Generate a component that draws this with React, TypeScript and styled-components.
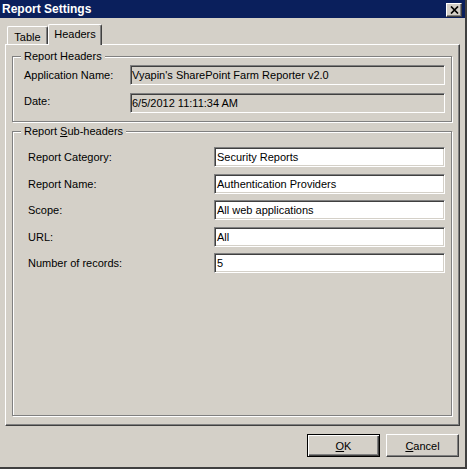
import { Fragment } from 'react';
import styled, { createGlobalStyle } from 'styled-components';

const GlobalStyle = createGlobalStyle`
  body {
    margin: 0;
    background: #d4d0c8;
    font-family: "Liberation Sans", Arial, sans-serif;
    font-size: 11px;
    color: #000;
  }
`;

const Window = styled.div`
  width: 467px;
  height: 469px;
  box-sizing: border-box;
  background: #d4d0c8;
  border-right: 2px solid #404040;
  border-bottom: 2px solid #404040;
  display: flex;
  flex-direction: column;
`;

const TitleBar = styled.div`
  height: 18px;
  flex-shrink: 0;
  background: #0a1f5c;
  display: flex;
  align-items: center;
  justify-content: space-between;
  padding: 0 3px 0 2px;
`;

const Title = styled.span`
  color: #fff;
  font-weight: bold;
  font-size: 12px;
  line-height: 1;
`;

const CloseButton = styled.div`
  width: 16px;
  height: 14px;
  box-sizing: border-box;
  margin-top: 2px;
  background: #d4d0c8;
  border: 1px solid;
  border-color: #fff #404040 #404040 #fff;
  box-shadow: inset -1px -1px 0 #808080;
  display: flex;
  align-items: center;
  justify-content: center;
`;

const Body = styled.div`
  padding: 6px 5px 0 5px;
  display: flex;
  flex-direction: column;
`;

const TabStrip = styled.div`
  height: 20px;
  display: flex;
  align-items: flex-end;
  padding-left: 2px;
`;

const Tab = styled.div<{ $active?: boolean }>`
  position: relative;
  box-sizing: border-box;
  width: ${(p) => (p.$active ? 54 : 41)}px;
  height: ${(p) => (p.$active ? 21 : 18)}px;
  margin-bottom: ${(p) => (p.$active ? -1 : 0)}px;
  z-index: ${(p) => (p.$active ? 1 : 0)};
  background: #d4d0c8;
  border-top: 1px solid #fff;
  border-left: 1px solid #fff;
  border-right: 1px solid #404040;
  border-radius: 2px 2px 0 0;
  box-shadow: inset -1px 0 0 #808080;
  display: flex;
  justify-content: center;
  padding-top: ${(p) => (p.$active ? 3 : 4)}px;
  line-height: 13px;
`;

const Panel = styled.div`
  height: 382px;
  box-sizing: border-box;
  border: 1px solid;
  border-color: #fff #404040 #404040 #fff;
  box-shadow: inset -1px -1px 0 #808080;
  padding: 11px 7px 0 6px;
  display: flex;
  flex-direction: column;
  gap: 9px;
`;

const Group = styled.div<{ $height: number }>`
  position: relative;
  box-sizing: border-box;
  height: ${(p) => p.$height}px;
  border: 1px solid #808080;
  box-shadow: inset 1px 1px 0 #fff, 1px 1px 0 #fff;
`;

const Legend = styled.span`
  position: absolute;
  top: -7px;
  left: 8px;
  padding: 0 3px;
  background: #d4d0c8;
  line-height: 13px;
`;

const Fields = styled.div<{ $label: number; $top: number; $left: number; $gap: number }>`
  display: grid;
  grid-template-columns: ${(p) => p.$label}px 1fr;
  grid-auto-rows: 20px;
  row-gap: ${(p) => p.$gap}px;
  padding: ${(p) => p.$top}px 6px 0 ${(p) => p.$left}px;
`;

const Label = styled.label<{ $shift?: number }>`
  align-self: center;
  position: relative;
  top: ${(p) => p.$shift ?? 0}px;
`;

const TextBox = styled.div<{ $readOnly?: boolean }>`
  box-sizing: border-box;
  height: 20px;
  border: 1px solid;
  border-color: #808080 #fff #fff #808080;
  box-shadow: inset 1px 1px 0 #404040, inset -1px -1px 0 #d4d0c8;
  background: ${(p) => (p.$readOnly ? '#d4d0c8' : '#fff')};
  padding: 0 0 0 ${(p) => (p.$readOnly ? 1 : 2)}px;
  display: flex;
  align-items: center;
  white-space: nowrap;
  overflow: hidden;
`;

const Footer = styled.div`
  display: flex;
  justify-content: flex-end;
  gap: 6px;
  padding: 8px 1px 0 0;
`;

const Button = styled.div<{ $default?: boolean }>`
  width: 73px;
  height: 23px;
  box-sizing: border-box;
  background: #d4d0c8;
  display: flex;
  align-items: center;
  justify-content: center;
  border: 1px solid;
  border-color: ${(p) => (p.$default ? '#000' : '#fff #404040 #404040 #fff')};
  box-shadow: ${(p) =>
    p.$default
      ? 'inset 1px 1px 0 #fff, inset -1px -1px 0 #404040, inset -2px -2px 0 #808080'
      : 'inset -1px -1px 0 #808080'};
`;

const Key = styled.span`
  text-decoration: underline;
`;

const headerRows = [
  { label: 'Application Name:', value: "Vyapin's SharePoint Farm Reporter v2.0", shift: 0 },
  { label: 'Date:', value: '6/5/2012 11:11:34 AM', shift: -2 },
];

const subRows = [
  { label: 'Report Category:', value: 'Security Reports' },
  { label: 'Report Name:', value: 'Authentication Providers' },
  { label: 'Scope:', value: 'All web applications' },
  { label: 'URL:', value: 'All' },
  { label: 'Number of records:', value: '5' },
];

export default function App() {
  return (
    <>
      <GlobalStyle />
      <Window>
        <TitleBar>
          <Title>Report Settings</Title>
          <CloseButton>
            <svg width="9" height="8" viewBox="0 0 9 8">
              <path d="M1 0.5 L8 7.5 M8 0.5 L1 7.5" stroke="#000" strokeWidth="1.7" />
            </svg>
          </CloseButton>
        </TitleBar>
        <Body>
          <TabStrip>
            <Tab>Table</Tab>
            <Tab $active>Headers</Tab>
          </TabStrip>
          <Panel>
            <Group $height={66}>
              <Legend>Report Headers</Legend>
              <Fields $label={106} $top={8} $left={11} $gap={8}>
                {headerRows.map((r) => (
                  <Fragment key={r.label}>
                    <Label $shift={r.shift}>{r.label}</Label>
                    <TextBox $readOnly>{r.value}</TextBox>
                  </Fragment>
                ))}
              </Fields>
            </Group>
            <Group $height={285}>
              <Legend>
                Report <Key>S</Key>ub-headers
              </Legend>
              <Fields $label={186} $top={15} $left={15} $gap={6.5}>
                {subRows.map((r) => (
                  <Fragment key={r.label}>
                    <Label>{r.label}</Label>
                    <TextBox>{r.value}</TextBox>
                  </Fragment>
                ))}
              </Fields>
            </Group>
          </Panel>
          <Footer>
            <Button $default>
              <span>
                <Key>O</Key>K
              </span>
            </Button>
            <Button>
              <span>
                <Key>C</Key>ancel
              </span>
            </Button>
          </Footer>
        </Body>
      </Window>
    </>
  );
}
